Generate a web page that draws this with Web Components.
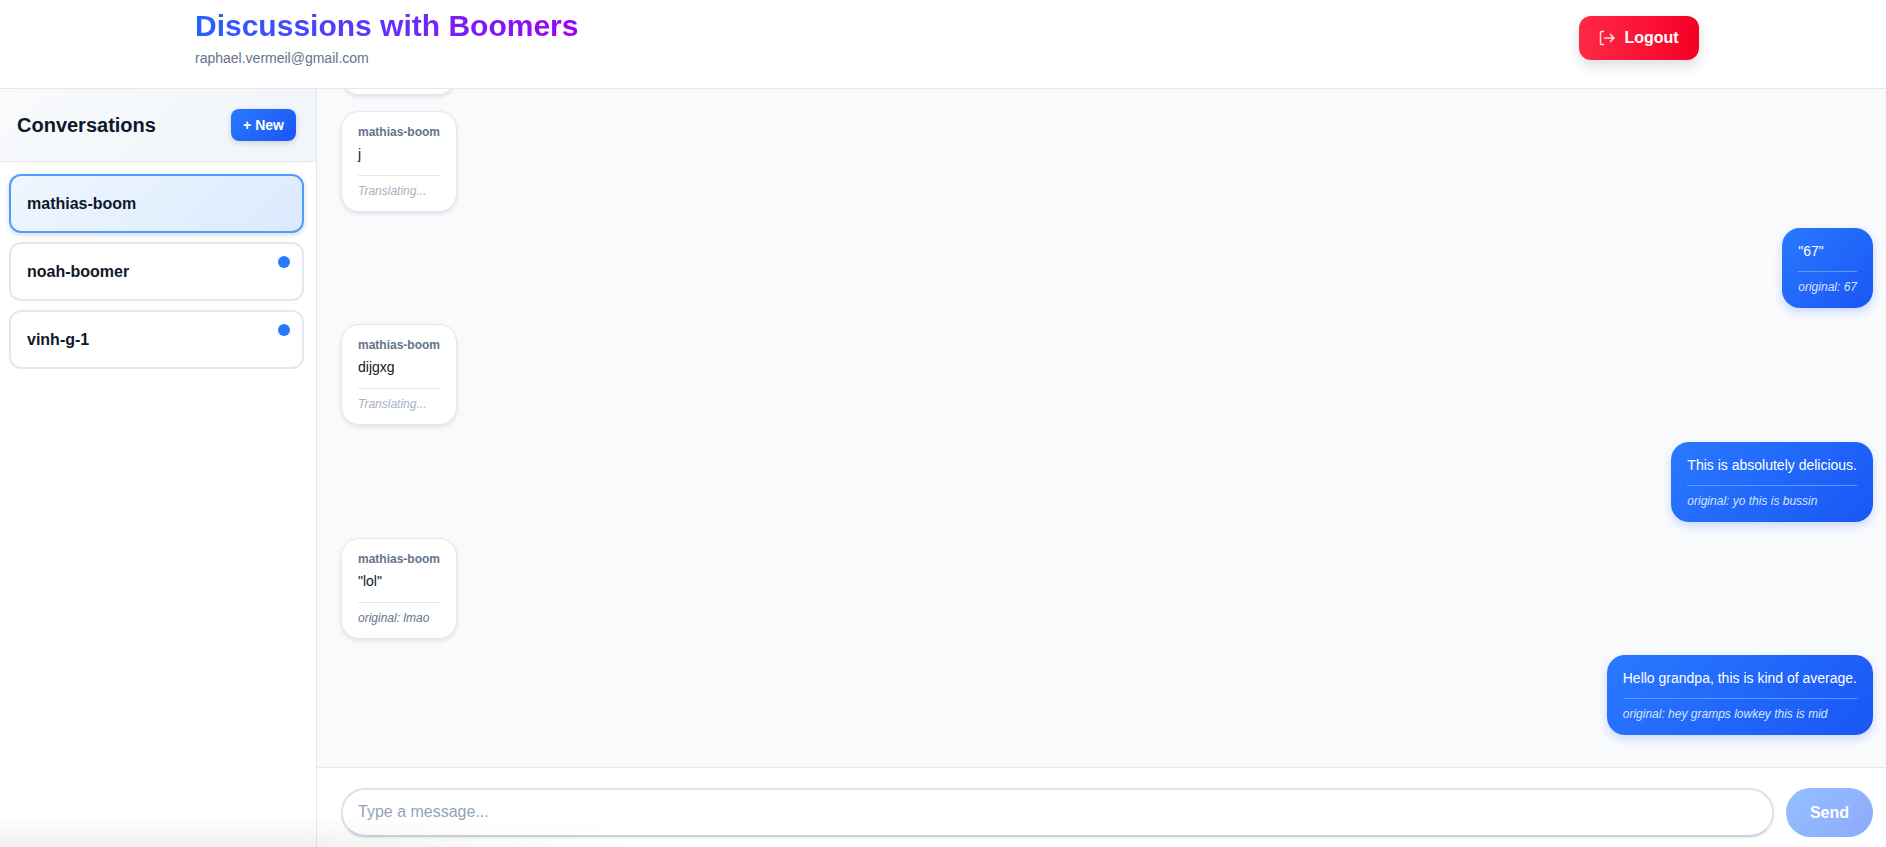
<!DOCTYPE html>
<html>
<head>
<meta charset="utf-8">
<title>Discussions with Boomers</title>
<style>
html, body { margin: 0; height: 100%; overflow: hidden; }
body { font-family: "Liberation Sans", Arial, sans-serif; background: #fff; }
</style>
</head>
<body>
<chat-app></chat-app>

<script>
class TopBar extends HTMLElement {
    constructor(){
        super()
        this._shadowRoot = this.attachShadow({mode :'open'});
        this._shadowRoot.innerHTML = `
    <style>
        :host{
            display: flex;
            flex: none;
            height: 88px;
            box-sizing: content-box;
            align-items: flex-start;
            justify-content: space-between;
            padding: 0 187px 0 195px;
            background: #fff;
            border-bottom: 1px solid #e2e8f0;
        }
        .who{
            padding-top: 8px;
        }
        .title{
            font-size: 30px;
            font-weight: 700;
            line-height: 36px;
            background: linear-gradient(90deg, #2563ff, #a000f0);
            -webkit-background-clip: text;
            background-clip: text;
            color: transparent;
            width: max-content;
        }
        .mail{
            font-size: 14px;
            line-height: 20px;
            color: #64748b;
            margin-top: 4px;
        }
        .logout{
            display: flex;
            align-items: center;
            justify-content: center;
            gap: 9px;
            width: 120px;
            height: 44px;
            margin-top: 16px;
            border: 0;
            border-radius: 12px;
            color: #fff;
            font: 700 16px "Liberation Sans", Arial, sans-serif;
            background: linear-gradient(90deg, #ff2947, #f50025);
            box-shadow: 0 6px 14px rgba(15, 23, 42, .14);
        }
        svg{ display: block; }
    </style>
    <div class="who">
        <div class="title">Discussions with Boomers</div>
        <div class="mail">raphael.vermeil@gmail.com</div>
    </div>
    <button class="logout">
        <svg width="16" height="16" viewBox="0 0 16 16" fill="none" stroke="#ffe0e5" stroke-width="1.5" stroke-linecap="round" stroke-linejoin="round">
            <path d="M4.5 1.5H2.5a1 1 0 0 0-1 1v11a1 1 0 0 0 1 1h2"/>
            <path d="M5.5 8H15M11.5 4.5L15 8l-3.5 3.5"/>
        </svg>
        Logout
    </button>`
    }
}

class ConvItem extends HTMLElement {
    constructor(){
        super()
        this._shadowRoot = this.attachShadow({mode :'open'});
        this._shadowRoot.innerHTML = `
    <style>
        :host{
            display: flex;
            align-items: center;
            position: relative;
            box-sizing: border-box;
            height: 59px;
            padding: 0 16px;
            border: 2px solid #e2e8f0;
            border-radius: 12px;
            background: #fff;
            color: #0f172a;
            font-size: 16px;
            font-weight: 700;
        }
        :host([active]){
            border-color: #4a9eff;
            background: linear-gradient(135deg, #eff6ff, #dbeafe);
            box-shadow: 0 2px 5px rgba(15, 23, 42, .16);
        }
        .dot{
            display: none;
            position: absolute;
            top: 12px;
            right: 12px;
            width: 12px;
            height: 12px;
            border-radius: 50%;
            background: #2979ff;
        }
        :host([unread]) .dot{ display: block; }
    </style>
    <slot></slot>
    <span class="dot"></span>`
    }
}

class SideBar extends HTMLElement {
    constructor(){
        super()
        this._shadowRoot = this.attachShadow({mode :'open'});
        this._shadowRoot.innerHTML = `
    <style>
        :host{
            display: flex;
            flex-direction: column;
            flex: none;
            width: 317px;
            box-sizing: border-box;
            background: #fff;
            border-right: 1px solid #e2e8f0;
        }
        .head{
            display: flex;
            align-items: center;
            justify-content: space-between;
            height: 72px;
            padding: 0 20px 0 17px;
            background: linear-gradient(135deg, #f8fafc, #f1f5f9);
            border-bottom: 1px solid #e2e8f0;
        }
        .title{
            font-size: 20px;
            font-weight: 700;
            color: #0f172a;
        }
        .new{
            width: 65px;
            height: 32px;
            border: 0;
            border-radius: 8px;
            color: #fff;
            font: 700 14px "Liberation Sans", Arial, sans-serif;
            background: linear-gradient(135deg, #2979ff, #1a56f5);
            box-shadow: 0 2px 6px rgba(15, 23, 42, .16);
        }
        .list{
            display: flex;
            flex-direction: column;
            gap: 9px;
            padding: 12px 12px 0 9px;
        }
    </style>
    <div class="head">
        <div class="title">Conversations</div>
        <button class="new">+ New</button>
    </div>
    <div class="list"><slot></slot></div>`
    }
}

class ChatBubble extends HTMLElement {
    constructor(){
        super()
        this._shadowRoot = this.attachShadow({mode :'open'});
        let sender = this.getAttribute('sender');
        let note = this.getAttribute('note');
        this._shadowRoot.innerHTML = `
    <style>
        :host{
            display: block;
            flex: none;
            align-self: flex-start;
            box-sizing: border-box;
            padding: 13px 16px;
            border: 1px solid #e2e8f0;
            border-radius: 18px;
            background: #fff;
            color: #0f172a;
            font-size: 14px;
            line-height: 20px;
            box-shadow: 0 2px 4px rgba(15, 23, 42, .1);
        }
        :host([mine]){
            align-self: flex-end;
            padding: 13px 16px 14px;
            border: 0;
            color: #fff;
            background: linear-gradient(135deg, #2979ff, #1a56f5);
            box-shadow: 0 4px 10px rgba(26, 86, 245, .2);
        }
        :host([clipped]){
            width: 115px;
            height: 100px;
        }
        .sender{
            font-size: 12px;
            font-weight: 700;
            line-height: 14px;
            color: #64748b;
            margin-bottom: 5px;
        }
        .note{
            font-size: 12px;
            font-style: italic;
            line-height: 14px;
            color: #64748b;
            margin-top: 11px;
            padding-top: 8px;
            border-top: 1px solid #e2e8f0;
        }
        :host([pending]) .note{ color: #a6b1c2; }
        :host([mine]) .note{
            margin-top: 10px;
            color: #d6e4ff;
            border-top-color: #5a9bff;
        }
    </style>
    ${sender ? `<div class="sender">${sender}</div>` : ''}
    <div><slot></slot></div>
    ${note ? `<div class="note">${note}</div>` : ''}`
    }
}

class MessageList extends HTMLElement {
    constructor(){
        super()
        this._shadowRoot = this.attachShadow({mode :'open'});
        this._shadowRoot.innerHTML = `
    <style>
        :host{
            display: flex;
            flex-direction: column;
            justify-content: flex-end;
            flex: 1;
            min-height: 0;
            overflow: hidden;
            gap: 16.2px;
            padding: 0 13px 32px 24px;
            background: #f8fafc;
        }
    </style>
    <slot></slot>`
    }
}

class MessageBar extends HTMLElement {
    constructor(){
        super()
        this._shadowRoot = this.attachShadow({mode :'open'});
        this._shadowRoot.innerHTML = `
    <style>
        :host{
            display: flex;
            flex: none;
            gap: 12px;
            height: 49px;
            padding: 20px 13px 10px 24px;
            background: #fff;
            border-top: 1px solid #e2e8f0;
        }
        input{
            flex: 1;
            min-width: 0;
            box-sizing: border-box;
            padding: 0 15px 2px;
            border: 2px solid #dbe3ee;
            border-bottom-color: #cbd5e1;
            border-radius: 24px;
            background: #fff;
            font: 16px "Liberation Sans", Arial, sans-serif;
            outline: none;
            box-shadow: 0 1px 2px rgba(15, 23, 42, .1);
        }
        input::placeholder{ color: #94a3b8; opacity: 1; }
        button{
            width: 87px;
            border: 0;
            border-radius: 25px;
            color: #fff;
            font: 700 16px "Liberation Sans", Arial, sans-serif;
            background: linear-gradient(135deg, #94bfff, #8daafb);
        }
    </style>
    <input type="text" placeholder="Type a message...">
    <button>Send</button>`
    }
}

class ChatApp extends HTMLElement {
    constructor(){
        super()
        this._shadowRoot = this.attachShadow({mode :'open'});
        this._shadowRoot.innerHTML = `
    <style>
        :host{
            display: flex;
            flex-direction: column;
            height: 847px;
            position: relative;
        }
        .body{
            display: flex;
            flex: 1;
            min-height: 0;
        }
        .main{
            display: flex;
            flex-direction: column;
            flex: 1;
            min-width: 0;
        }
        .fade{
            position: absolute;
            left: 0;
            bottom: 0;
            width: 640px;
            height: 30px;
            pointer-events: none;
            background: linear-gradient(to top, rgba(0, 0, 0, .06), rgba(0, 0, 0, 0));
            -webkit-mask-image: linear-gradient(90deg, #000 45%, transparent);
            mask-image: linear-gradient(90deg, #000 45%, transparent);
        }
    </style>
    <top-bar></top-bar>
    <div class="body">
        <side-bar>
            <conv-item active>mathias-boom</conv-item>
            <conv-item unread>noah-boomer</conv-item>
            <conv-item unread>vinh-g-1</conv-item>
        </side-bar>
        <div class="main">
            <message-list>
                <chat-bubble clipped></chat-bubble>
                <chat-bubble sender="mathias-boom" note="Translating..." pending>j</chat-bubble>
                <chat-bubble mine note="original: 67">"67"</chat-bubble>
                <chat-bubble sender="mathias-boom" note="Translating..." pending>dijgxg</chat-bubble>
                <chat-bubble mine note="original: yo this is bussin">This is absolutely delicious.</chat-bubble>
                <chat-bubble sender="mathias-boom" note="original: lmao">"lol"</chat-bubble>
                <chat-bubble mine note="original: hey gramps lowkey this is mid">Hello grandpa, this is kind of average.</chat-bubble>
            </message-list>
            <message-bar></message-bar>
        </div>
    </div>
    <div class="fade"></div>`
    }
}

window.customElements.define('top-bar',TopBar);
window.customElements.define('conv-item',ConvItem);
window.customElements.define('side-bar',SideBar);
window.customElements.define('chat-bubble',ChatBubble);
window.customElements.define('message-list',MessageList);
window.customElements.define('message-bar',MessageBar);
window.customElements.define('chat-app',ChatApp);
</script>
</body>
</html>
